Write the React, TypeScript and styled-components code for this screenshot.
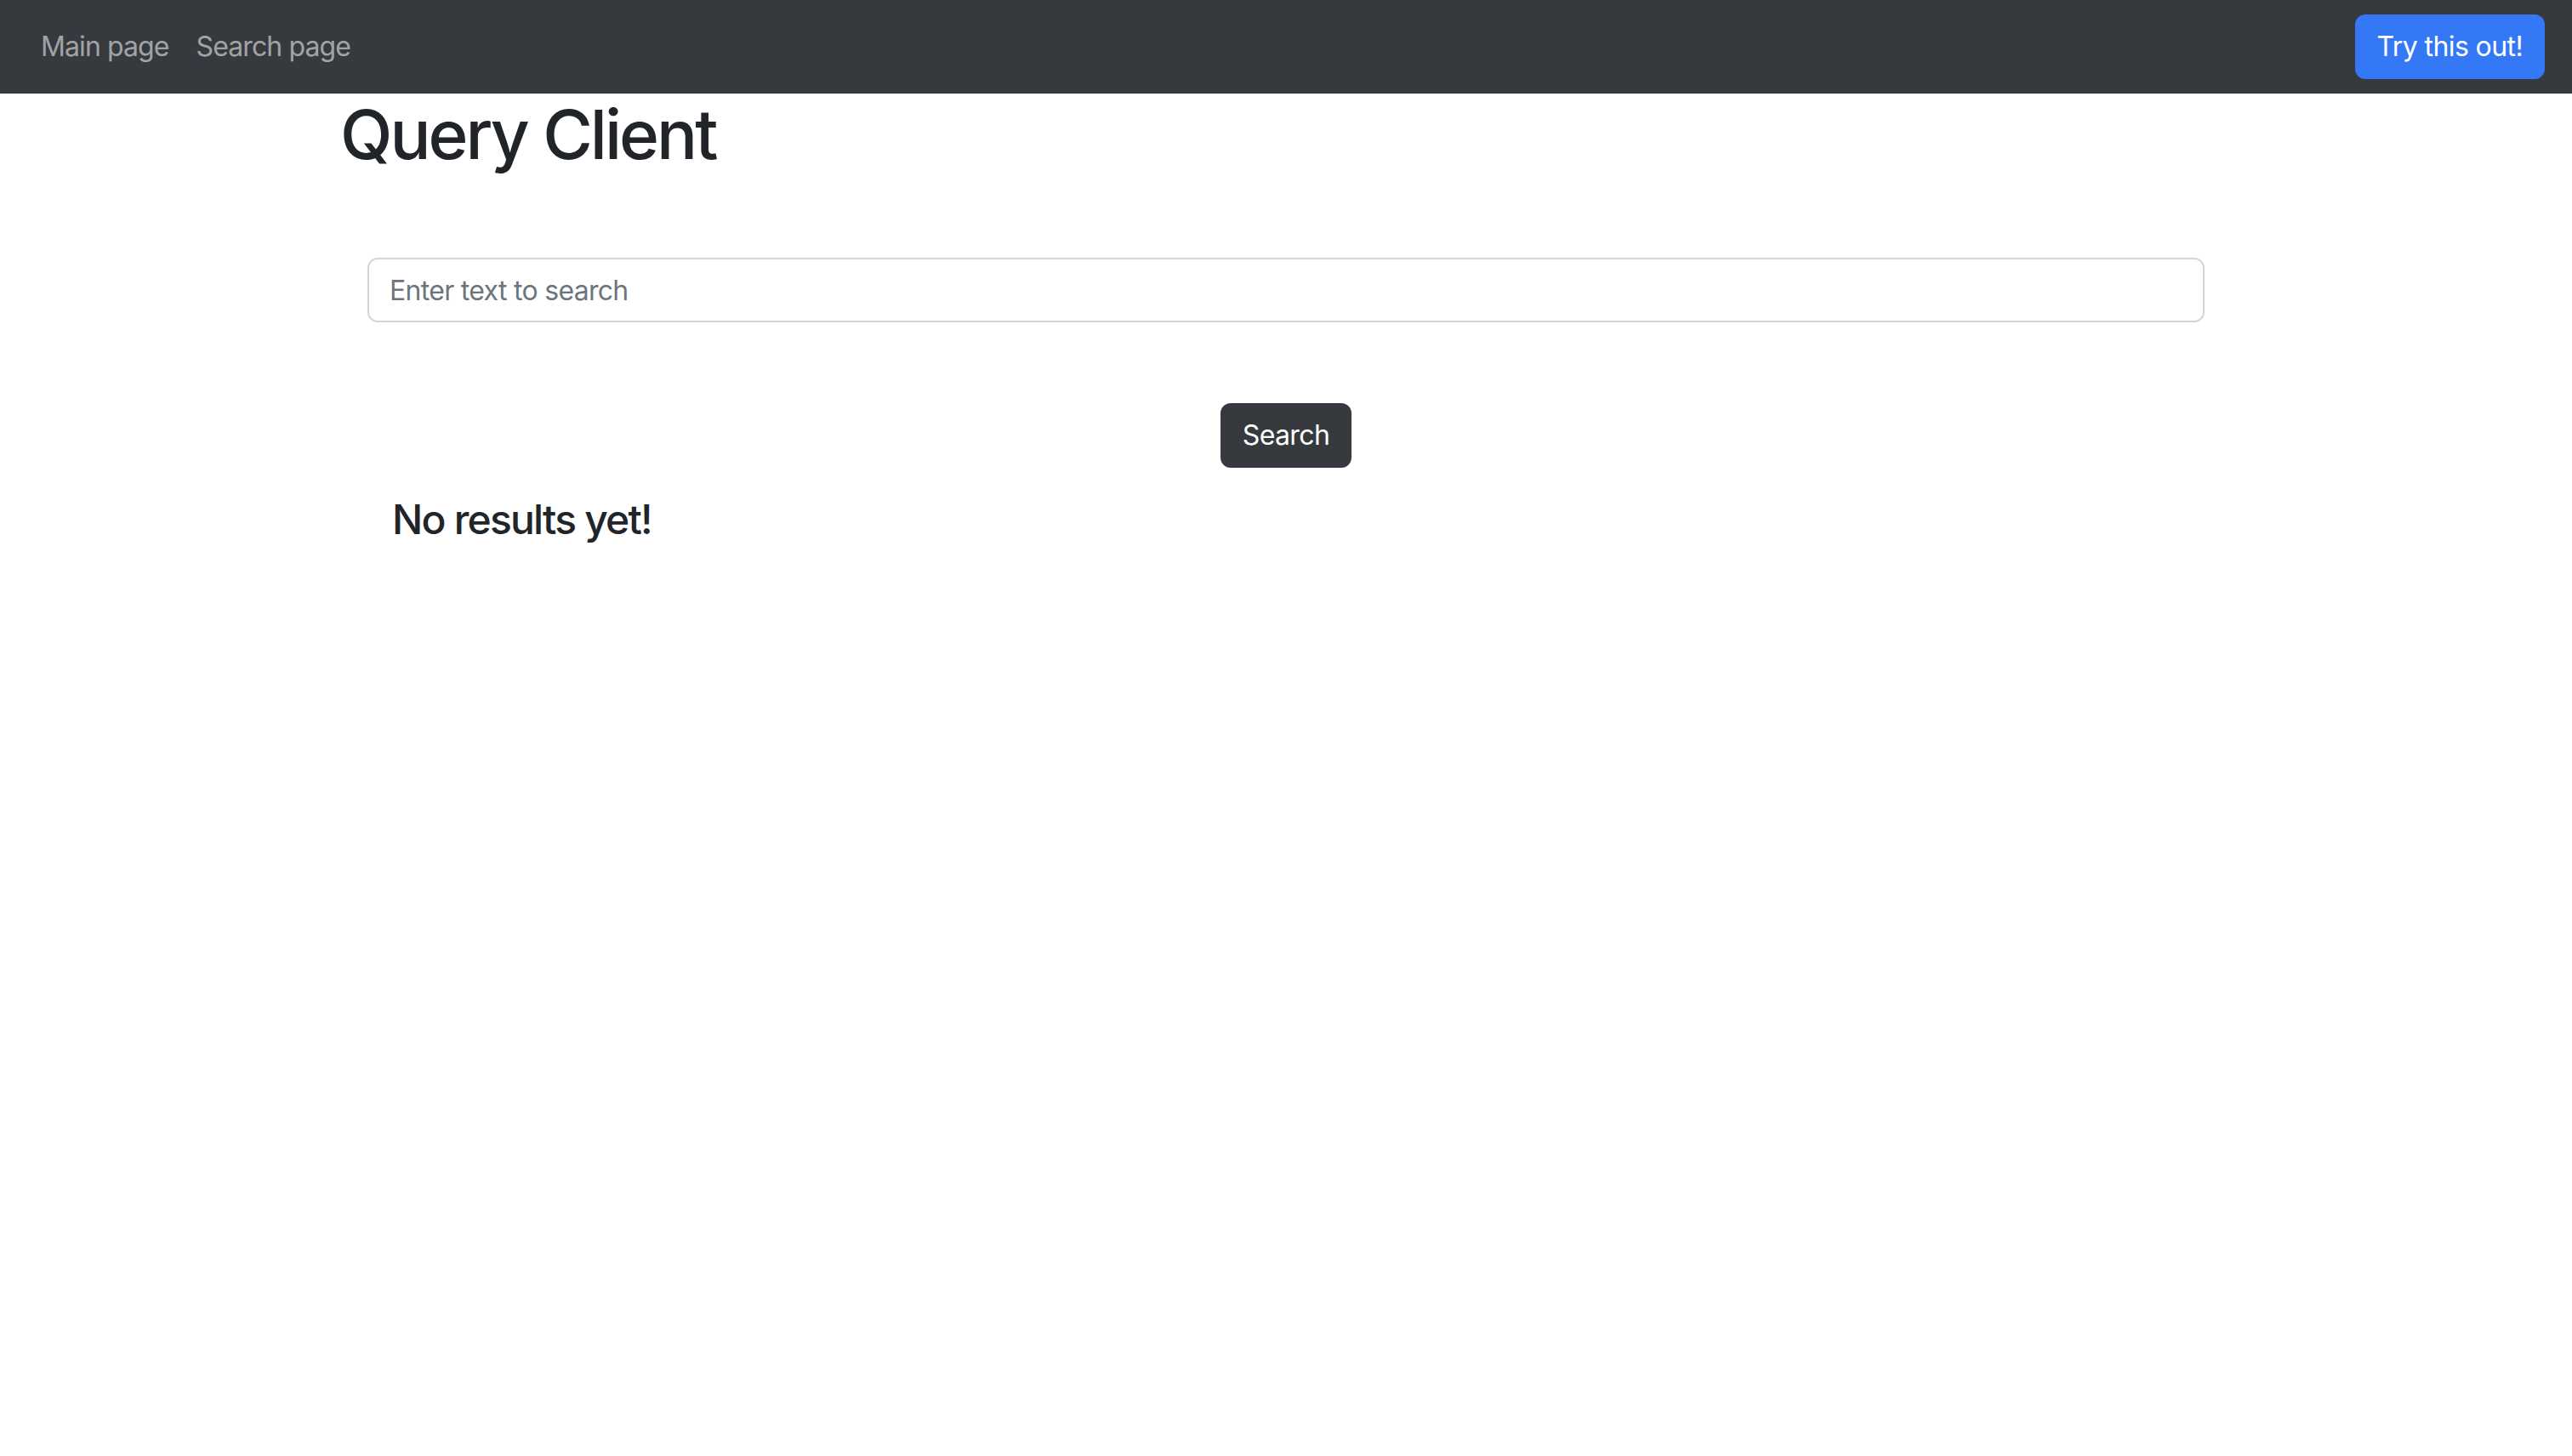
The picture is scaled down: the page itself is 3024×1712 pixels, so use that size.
import React from "react";
import styled, { createGlobalStyle } from "styled-components";

const GlobalStyle = createGlobalStyle`
  html, body {
    margin: 0;
    padding: 0;
    background: #ffffff;
  }
  body {
    font-family: Inter, "Noto Sans", "Liberation Sans", sans-serif;
    color: #212529;
    -webkit-font-smoothing: antialiased;
  }
  * { box-sizing: border-box; }
`;

const Navbar = styled.nav`
  display: flex;
  align-items: center;
  justify-content: space-between;
  height: 110px;
  padding: 0 32px;
  background: #363a3f;
`;

const NavList = styled.div`
  display: flex;
  align-items: center;
`;

const NavLink = styled.a`
  display: block;
  padding: 16px 16px;
  font-size: 32px;
  line-height: 48px;
  letter-spacing: -0.9px;
  color: rgba(255, 255, 255, 0.55);
  text-decoration: none;
  cursor: pointer;
`;

const Button = styled.button<{ $variant: "primary" | "dark" }>`
  font-family: inherit;
  font-size: 32px;
  line-height: 48px;
  font-weight: 400;
  letter-spacing: -0.6px;
  padding: 12px 24px;
  border-radius: 12px;
  border: 2px solid ${(p) => (p.$variant === "primary" ? "#3478f6" : "#363a3f")};
  background: ${(p) => (p.$variant === "primary" ? "#3478f6" : "#363a3f")};
  color: #ffffff;
  cursor: pointer;
`;

const Main = styled.main`
  width: 2224px;
  margin: 0 auto;
`;

const Title = styled.h1`
  margin: 0;
  font-size: 80px;
  line-height: 96px;
  font-weight: 500;
  letter-spacing: -3px;
  color: #212529;
`;

const SearchForm = styled.form`
  display: flex;
  flex-direction: column;
  padding: 0 32px;
  margin-top: 97px;
`;

const SearchInput = styled.input`
  width: 100%;
  height: 76px;
  padding: 12px 24px;
  font-family: inherit;
  font-size: 32px;
  line-height: 48px;
  letter-spacing: -0.7px;
  color: #212529;
  border: 2px solid #d3d7dc;
  border-radius: 12px;
  outline: none;
  &::placeholder {
    color: #6c757d;
  }
`;

const ButtonRow = styled.div`
  display: flex;
  justify-content: center;
  margin-top: 95px;
`;

const Results = styled.h4`
  margin: 32px 0 0;
  padding-left: 61px;
  font-size: 48px;
  line-height: 57.6px;
  font-weight: 500;
  letter-spacing: -1.8px;
  color: #212529;
`;

export default function App() {
  return (
    <>
      <GlobalStyle />
      <Navbar>
        <NavList>
          <NavLink>Main page</NavLink>
          <NavLink>Search page</NavLink>
        </NavList>
        <Button $variant="primary" type="button">
          Try this out!
        </Button>
      </Navbar>
      <Main>
        <Title>Query Client</Title>
        <SearchForm onSubmit={(e) => e.preventDefault()}>
          <SearchInput type="text" placeholder="Enter text to search" />
          <ButtonRow>
            <Button $variant="dark" type="submit">
              Search
            </Button>
          </ButtonRow>
        </SearchForm>
        <Results>No results yet!</Results>
      </Main>
    </>
  );
}
